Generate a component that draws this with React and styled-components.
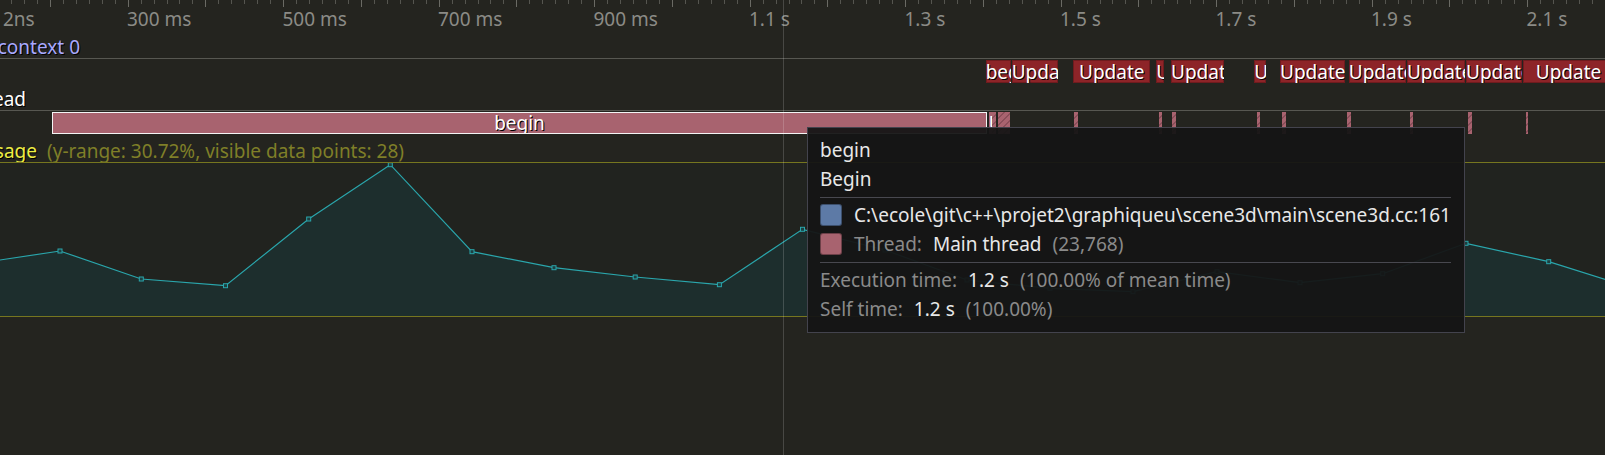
import React from "react";
import styled, { createGlobalStyle } from "styled-components";

const GlobalStyle = createGlobalStyle`
  html, body {
    margin: 0;
    padding: 0;
    background: #24241f;
  }
  body {
    font-family: "Noto Sans", "DejaVu Sans", sans-serif;
  }
`;

const WIDTH = 1605;
const TICK_STEP = 77.75;
const FIRST_MAJOR = 49.9;

const LABELS = [
  ["2ns", 3],
  ["300 ms", 127],
  ["500 ms", 282.5],
  ["700 ms", 438],
  ["900 ms", 593.5],
  ["1.1 s", 749],
  ["1.3 s", 904.5],
  ["1.5 s", 1060],
  ["1.7 s", 1215.5],
  ["1.9 s", 1371],
  ["2.1 s", 1526.5],
];

const GPU_ZONES = [
  { x1: 985.7, x2: 1011, name: "begin" },
  { x1: 1011.7, x2: 1057.7, name: "Update" },
  { x1: 1073.4, x2: 1150.2, name: "Update" },
  { x1: 1156.3, x2: 1164.2, name: "Update" },
  { x1: 1171, x2: 1224.3, name: "Update" },
  { x1: 1254.3, x2: 1265.6, name: "Update" },
  { x1: 1280, x2: 1344.7, name: "Update" },
  { x1: 1348.8, x2: 1406.2, name: "Update" },
  { x1: 1406.9, x2: 1464.9, name: "Update" },
  { x1: 1466, x2: 1521.5, name: "Update" },
  { x1: 1523, x2: 1614, name: "Update" },
];

const CPU_ZONES = [
  { x1: 52.3, x2: 986.7, name: "begin", hovered: true },
  { x1: 988.7, x2: 992, name: "Update" },
  { x1: 992.3, x2: 996, folded: true },
  { x1: 997.7, x2: 1010, folded: true },
  { x1: 1074, x2: 1078, folded: true },
  { x1: 1159.4, x2: 1162, folded: true },
  { x1: 1172.4, x2: 1175.8, folded: true },
  { x1: 1257, x2: 1260, folded: true },
  { x1: 1282.3, x2: 1285.7, folded: true },
  { x1: 1347, x2: 1351, folded: true },
  { x1: 1410.3, x2: 1413, folded: true },
  { x1: 1468.3, x2: 1471.7, folded: true },
  { x1: 1525.6, x2: 1528, folded: true },
];

const PLOT_TOP = 163;
const PLOT_HEIGHT = 153;
const USAGE = [
  [-22, 263.3], [60, 251], [141.3, 279], [225.5, 285.7], [308.7, 219],
  [390.3, 164.7], [472, 251.7], [554, 267.7], [635.2, 277], [719.4, 284.7],
  [802.5, 229.3], [885, 250], [967, 280], [1050, 288.3], [1133, 291.7],
  [1217, 271.7], [1300, 282.7], [1382.7, 273.7], [1466, 243.3],
  [1548.7, 261.7], [1631, 287.5],
];

const Timeline = styled.div`
  position: relative;
  width: ${WIDTH}px;
  height: 455px;
  overflow: hidden;
  display: flex;
  flex-direction: column;
  background: #24241f;
  color: #e8e8e8;
  font-size: 19px;
  line-height: 22px;
`;

const Ruler = styled.div`
  position: relative;
  flex: none;
  height: 36px;
`;

const Tick = styled.div`
  position: absolute;
  top: 0;
  width: 1px;
  height: ${(p) => (p.$major ? 7 : 4)}px;
  background: ${(p) => (p.$major ? "#6a6a64" : "#55554f")};
`;

const TickLabel = styled.span`
  position: absolute;
  top: 8px;
  color: #8b8b86;
  white-space: nowrap;
`;

const TrackHeader = styled.div`
  flex: none;
  height: 22px;
  display: flex;
  align-items: center;
  white-space: nowrap;
  border-bottom: ${(p) => (p.$ruled ? "1px solid #575751" : "none")};
`;

const TrackName = styled.div`
  flex: none;
  width: ${(p) => p.$end}px;
  display: flex;
  justify-content: flex-end;
  color: ${(p) => p.$color};
  text-shadow: 1px 1px 0 #000;
`;

const PlotInfo = styled.span`
  margin-left: 10px;
  color: #7f7f28;
`;

const Track = styled.div`
  position: relative;
  flex: none;
  height: 29px;
`;

const Zone = styled.div`
  position: absolute;
  top: 1px;
  box-sizing: border-box;
  display: flex;
  justify-content: safe center;
  overflow: hidden;
  white-space: nowrap;
  color: #fff;
  text-shadow: 1px 1px 0 #000;
`;

const GpuZone = styled(Zone)`
  height: 23px;
  padding-top: 1px;
  background: #8d2428;
  box-shadow: inset 0 0 0 1px #6f1b1e;
`;

const CpuZone = styled(Zone)`
  height: 22px;
  background-color: #a8636f;
  background-image: ${(p) =>
    p.$folded
      ? "repeating-linear-gradient(135deg, transparent 0 4px, rgba(70,30,40,0.3) 4px 5px)"
      : "none"};
  border: ${(p) => (p.$hovered ? "1px solid #f4f4f4" : "none")};
  line-height: ${(p) => (p.$hovered ? 20 : 22)}px;
`;

const PlotHeader = styled(TrackHeader)``;

const Plot = styled.div`
  flex: none;
  height: ${PLOT_HEIGHT}px;
  border-top: 1px solid #76761f;
  border-bottom: 1px solid #76761f;
  background: #21231f;
`;

const Chart = styled.svg`
  display: block;
`;

const Cursor = styled.div`
  position: absolute;
  top: 0;
  bottom: 0;
  left: 783px;
  width: 1px;
  background: rgba(255, 255, 255, 0.17);
`;

const Tooltip = styled.div`
  position: absolute;
  left: 807px;
  top: 127px;
  display: flex;
  flex-direction: column;
  gap: 7px;
  padding: 11px 13px 12px 12px;
  background: rgba(21, 21, 21, 0.95);
  border: 1px solid #43434d;
  white-space: nowrap;
`;

const Separator = styled.div`
  height: 1px;
  margin-bottom: -1px;
  background: #48484f;
`;

const InfoLine = styled.div`
  display: flex;
  align-items: center;
  gap: 11px;
`;

const Swatch = styled.span`
  flex: none;
  width: 22px;
  height: 22px;
  margin-right: 1px;
  box-sizing: border-box;
  border-radius: 3px;
  border: 1px solid rgba(0, 0, 0, 0.35);
  background: ${(p) => p.$color};
`;

const Dim = styled.span`
  color: #8a8a8a;
`;

function buildTicks() {
  const ticks = [];
  const sub = TICK_STEP / 6;
  for (let i = -1; FIRST_MAJOR + i * TICK_STEP < WIDTH; i++) {
    const base = FIRST_MAJOR + i * TICK_STEP;
    ticks.push({ x: base, major: true });
    for (let j = 1; j < 6; j++) ticks.push({ x: base + j * sub, major: false });
  }
  return ticks.filter((t) => t.x >= 0 && t.x < WIDTH);
}

function UsageChart() {
  const pts = USAGE.map(([x, y]) => [x, y - PLOT_TOP]);
  const line = pts.map(([x, y]) => `${x},${y}`).join(" ");
  const area = `${pts[0][0]},${PLOT_HEIGHT} ${line} ${pts[pts.length - 1][0]},${PLOT_HEIGHT}`;
  return (
    <Chart width={WIDTH} height={PLOT_HEIGHT} viewBox={`0 0 ${WIDTH} ${PLOT_HEIGHT}`}>
      <polygon points={area} fill="#1d2e2d" />
      <polyline points={line} fill="none" stroke="#2aa6ac" strokeWidth="1.2" />
      {pts.map(([x, y], i) => (
        <rect
          key={i}
          x={x - 2}
          y={y - 2}
          width="4"
          height="4"
          fill="#1d3f40"
          stroke="#2aa6ac"
          strokeWidth="1"
        />
      ))}
    </Chart>
  );
}

export default function App() {
  const ticks = buildTicks();
  return (
    <>
      <GlobalStyle />
      <Timeline>
        <Ruler>
          {ticks.map((t, i) => (
            <Tick key={i} $major={t.major} style={{ left: Math.round(t.x) }} />
          ))}
          {LABELS.map(([text, x]) => (
            <TickLabel key={text} style={{ left: x }}>
              {text}
            </TickLabel>
          ))}
        </Ruler>

        <TrackHeader $ruled>
          <TrackName $end={80} $color="#a9a9ff">
            OpenGL context 0
          </TrackName>
        </TrackHeader>
        <Track>
          {GPU_ZONES.map((z, i) => (
            <GpuZone key={i} style={{ left: z.x1, width: z.x2 - z.x1 }}>
              {z.name}
            </GpuZone>
          ))}
        </Track>

        <TrackHeader $ruled>
          <TrackName $end={26} $color="#ffffff">
            Main thread
          </TrackName>
        </TrackHeader>
        <Track>
          {CPU_ZONES.map((z, i) => (
            <CpuZone
              key={i}
              $hovered={z.hovered}
              $folded={z.folded}
              style={{ left: z.x1, width: z.x2 - z.x1 }}
            >
              {z.name}
            </CpuZone>
          ))}
        </Track>

        <PlotHeader>
          <TrackName $end={37} $color="#eeee44">
            CPU usage
          </TrackName>
          <PlotInfo>(y-range: 30.72%, visible data points: 28)</PlotInfo>
        </PlotHeader>
        <Plot>
          <UsageChart />
        </Plot>

        <Cursor />

        <Tooltip>
          <div>begin</div>
          <div>Begin</div>
          <Separator />
          <InfoLine>
            <Swatch $color="#5d7aa6" />
            <span>C:\ecole\git\c++\projet2\graphiqueu\scene3d\main\scene3d.cc:161</span>
          </InfoLine>
          <InfoLine>
            <Swatch $color="#a8636f" />
            <Dim>Thread:</Dim>
            <span>Main thread</span>
            <Dim>(23,768)</Dim>
          </InfoLine>
          <Separator />
          <InfoLine>
            <Dim>Execution time:</Dim>
            <span>1.2 s</span>
            <Dim>(100.00% of mean time)</Dim>
          </InfoLine>
          <InfoLine>
            <Dim>Self time:</Dim>
            <span>1.2 s</span>
            <Dim>(100.00%)</Dim>
          </InfoLine>
        </Tooltip>
      </Timeline>
    </>
  );
}
